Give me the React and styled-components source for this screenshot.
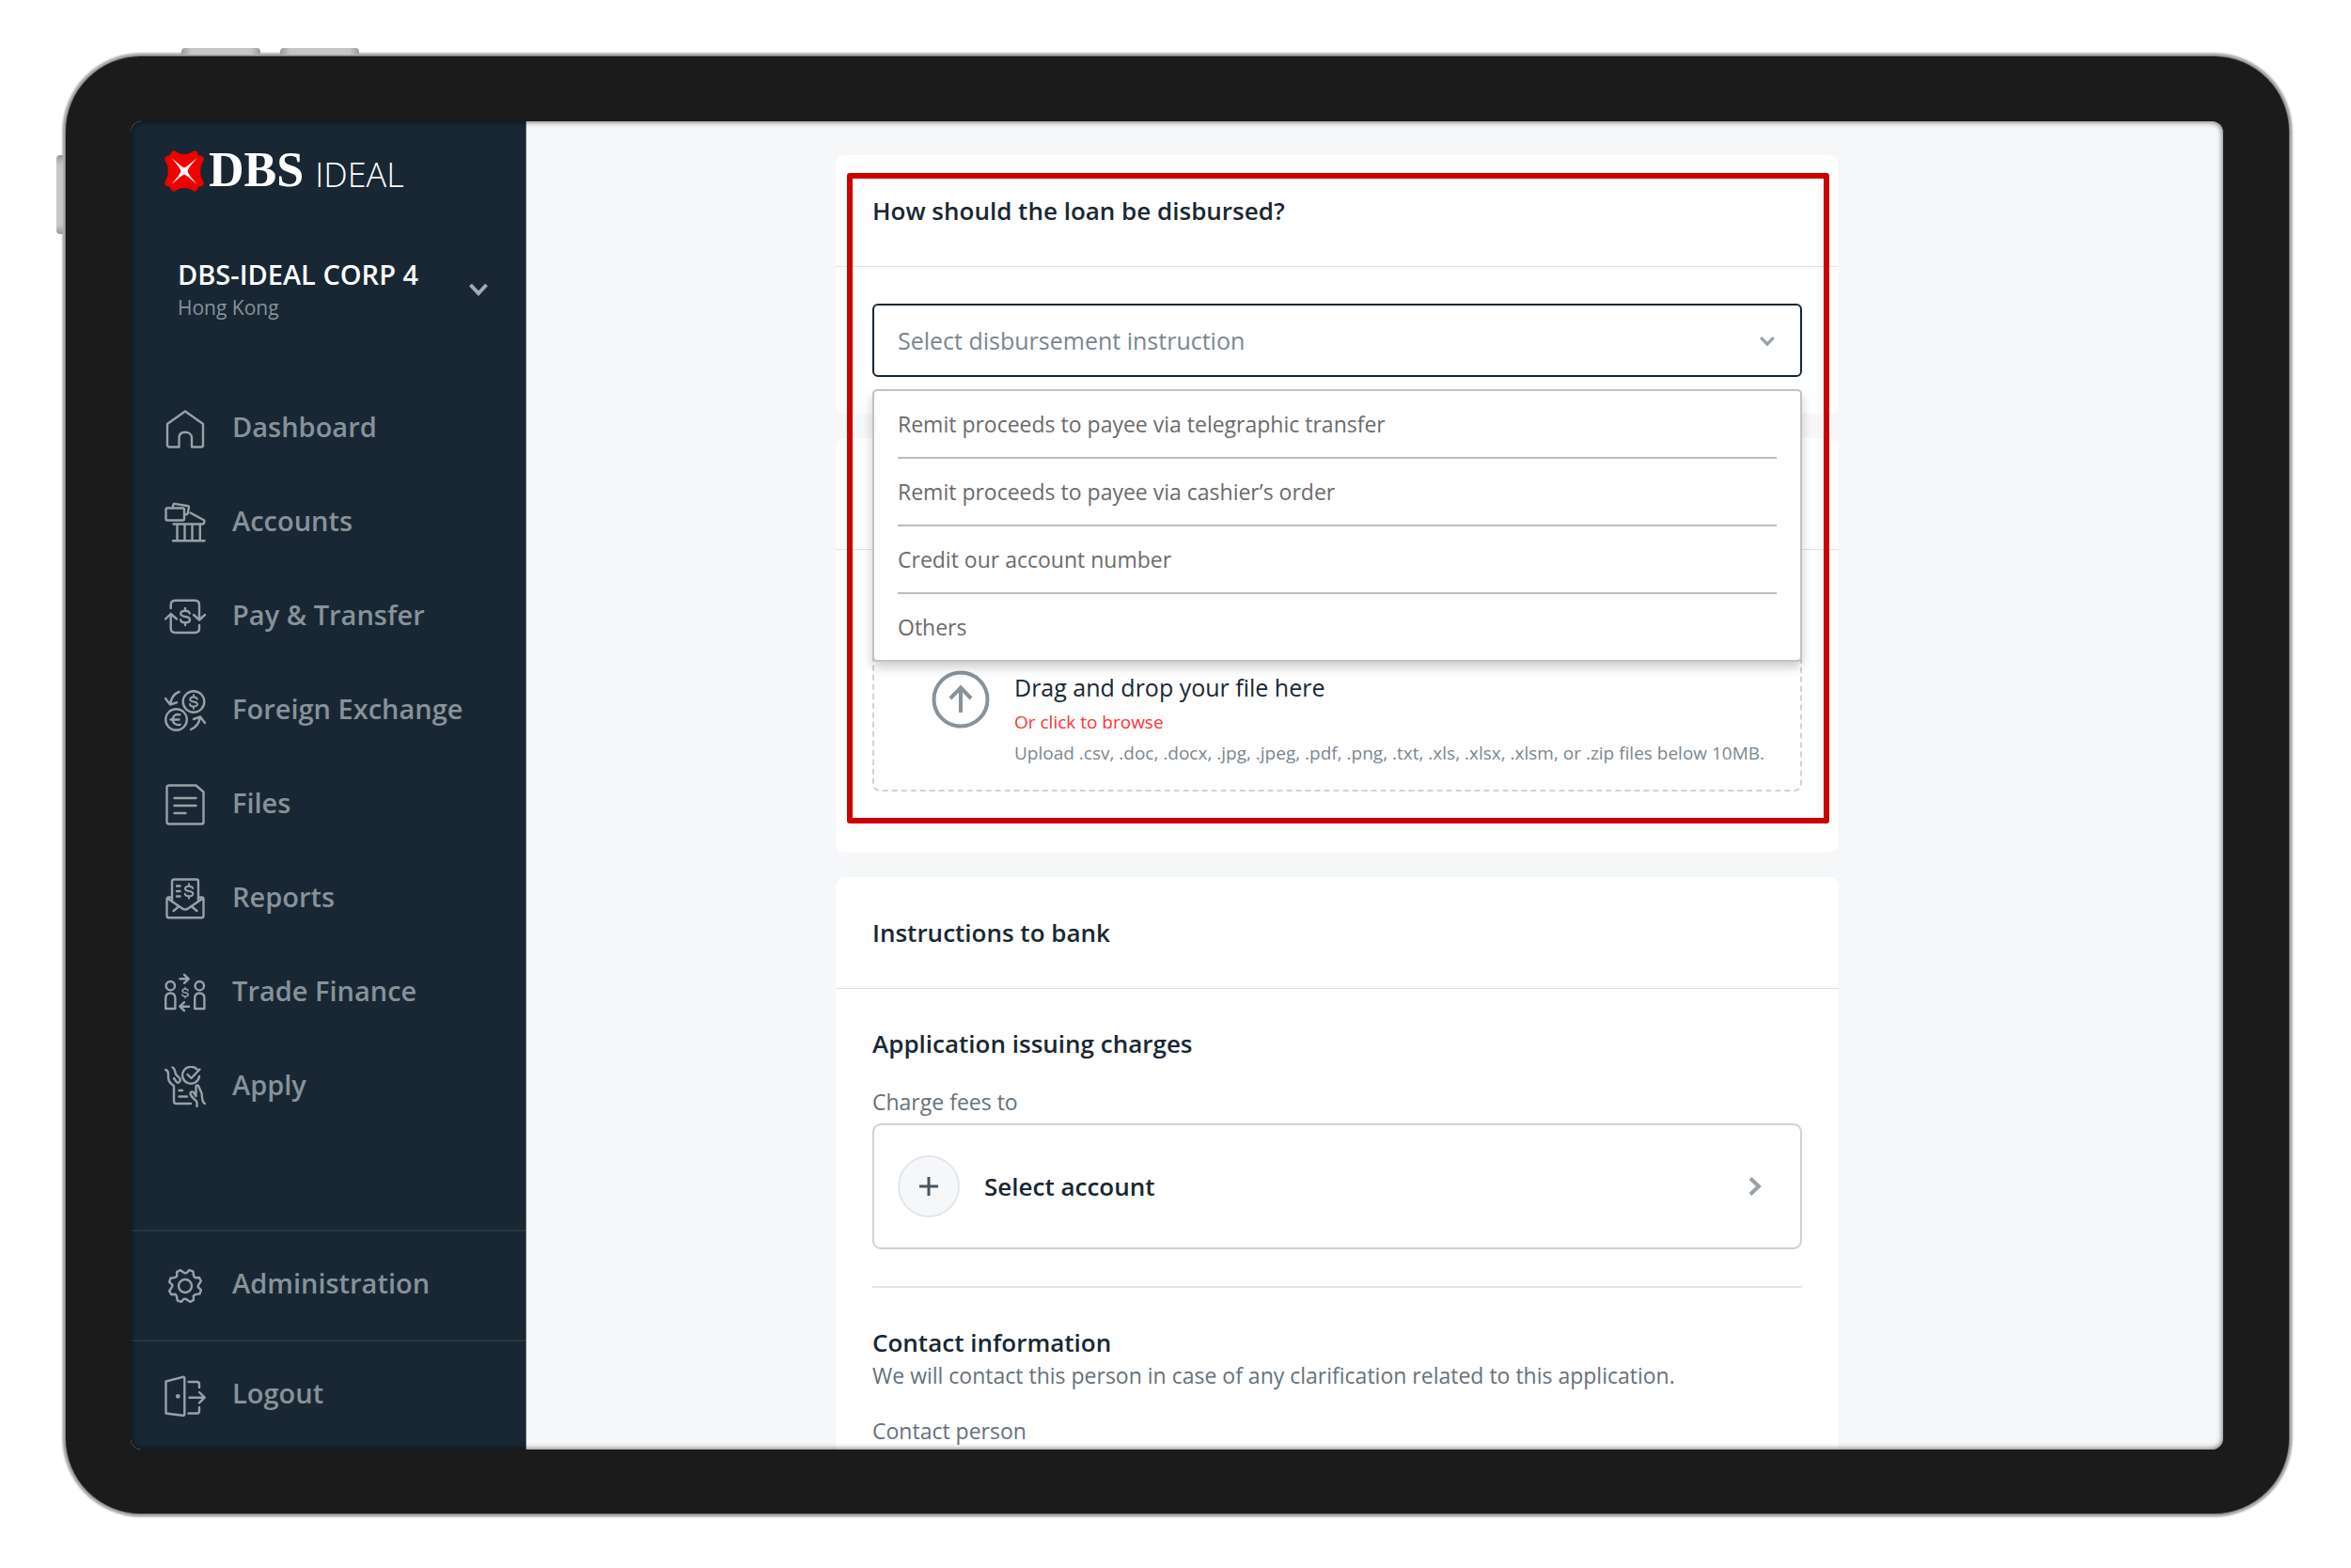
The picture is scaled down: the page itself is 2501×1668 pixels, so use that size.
import React, { useState } from 'react';
import styled, { createGlobalStyle } from 'styled-components';

const GlobalStyle = createGlobalStyle`
  *, *::before, *::after {
    box-sizing: border-box;
  }

  body {
    margin: 0;
    background: #ffffff;
    font-family: 'Open Sans', 'Noto Sans', sans-serif;
  }

  button, input, select {
    font-family: inherit;
  }

  h2, h3, p, ul {
    margin: 0;
    padding: 0;
  }
`;

/* ---------- tablet frame ---------- */

const Stage = styled.div`
  display: flex;
  height: 100vh;
  padding: 60px 66px 58px 70px;
`;

const Device = styled.div`
  position: relative;
  display: flex;
  flex: 1;
  min-width: 0;
  padding: 69px 70px 68px 69px;
  background: #1b1b1b;
  border-radius: 80px;
  box-shadow: 0 0 0 1px #777777, 0 0 0 3px #acacac, 0 0 0 4px #d0d0d0,
    0 0 0 5px #ebebeb;
`;

const HardwareKey = styled.span`
  position: absolute;
  background: linear-gradient(
    ${({ $side }) => ($side ? '180deg' : '90deg')},
    #9a9a9a,
    #c6c6c6 12%,
    #c6c6c6 88%,
    #9a9a9a
  );
  border-radius: ${({ $side }) => ($side ? '4px 0 0 4px' : '4px 4px 0 0')};
  width: ${({ $side }) => ($side ? '7px' : '84px')};
  height: ${({ $side }) => ($side ? '84px' : '7px')};
  left: ${({ $left }) => $left}px;
  top: ${({ $top }) => $top}px;
`;

const Screen = styled.div`
  position: relative;
  display: flex;
  flex: 1;
  min-width: 0;
  overflow: hidden;
  background: #f5f7f9;
  border-radius: 12px;

  &::after {
    content: '';
    position: absolute;
    inset: 0;
    border-radius: 12px;
    box-shadow: inset 0 0 6px rgba(0, 0, 0, 0.7);
    pointer-events: none;
  }
`;

/* ---------- sidebar ---------- */

const Sidebar = styled.aside`
  display: flex;
  flex-direction: column;
  flex: none;
  width: 421px;
  background: #182733;
  border-right: 1px solid #54616b;
`;

const Logo = styled.div`
  display: flex;
  align-items: flex-end;
  height: 75px;
  padding-left: 36px;
  color: #ffffff;
`;

const LogoBank = styled.span`
  margin-left: 5px;
  font-family: 'Liberation Serif', serif;
  font-weight: 700;
  font-size: 52px;
  line-height: 47px;
`;

const LogoProduct = styled.span`
  margin-left: 12px;
  font-weight: 300;
  font-size: 36px;
  line-height: 36px;
`;

const CompanySwitch = styled.button`
  display: flex;
  align-items: center;
  justify-content: space-between;
  margin-top: 69px;
  padding: 0 40px 0 50px;
  border: 0;
  background: none;
  color: #a3abb1;
  text-align: left;
`;

const CompanyName = styled.span`
  display: block;
  font-weight: 600;
  font-size: 29px;
  line-height: 38px;
  color: #ffffff;
`;

const CompanyPlace = styled.span`
  display: block;
  font-size: 21px;
  line-height: 32px;
  color: #87929a;
`;

const Nav = styled.nav`
  display: flex;
  flex-direction: column;
  margin-top: 60px;
`;

const NavFooter = styled.nav`
  display: flex;
  flex-direction: column;
  margin-top: auto;
`;

const NavLink = styled.a`
  display: flex;
  align-items: center;
  gap: 28px;
  height: ${({ $footer }) => ($footer ? '117px' : '100px')};
  padding: ${({ $footer }) => ($footer ? '0 0 6px 36px' : '0 0 0 36px')};
  border-top: ${({ $footer }) => ($footer ? '2px solid #28363f' : '0')};
  font-weight: 600;
  font-size: 29px;
  color: #87929a;
  text-decoration: none;

  svg {
    flex: none;
    margin-top: 6px;
    color: #98a1a8;
  }
`;

/* ---------- form ---------- */

const Main = styled.main`
  display: flex;
  flex: 1;
  justify-content: center;
  min-width: 0;
  padding: 36px 80px 0 0;
`;

const Column = styled.div`
  display: flex;
  flex-direction: column;
  gap: 26px;
  width: 100%;
  max-width: 1067px;
`;

const HighlightGroup = styled.div`
  position: relative;
  display: flex;
  flex-direction: column;
  gap: 26px;
`;

const Highlight = styled.div`
  position: absolute;
  inset: 19px 10px 31px 12px;
  border: 6px solid #cc0000;
  border-radius: 3px;
  pointer-events: none;
`;

const Card = styled.section`
  flex: none;
  background: #ffffff;
  border-radius: 10px;
`;

const CardHeader = styled.header`
  display: flex;
  align-items: center;
  height: 119px;
  padding: 0 39px;
  border-bottom: 1px solid #dde3e8;
`;

const CardBody = styled.div`
  display: flex;
  flex-direction: column;
  padding: 39px;
`;

const UploadBody = styled.div`
  display: flex;
  flex-direction: column;
  justify-content: flex-end;
  height: 322px;
  padding: 39px 39px 65px;
`;

const Title = styled.h2`
  font-weight: 600;
  font-size: 26px;
  line-height: 38px;
  color: #182733;
`;

const Text = styled.p`
  font-size: 23px;
  line-height: 32px;
  color: #66717a;
`;

const FieldLabel = styled.label`
  margin: 27px 0 7px;
  font-size: 23px;
  line-height: 32px;
  color: #66717a;
`;

const Divider = styled.hr`
  width: 100%;
  height: 2px;
  margin: 39px 0;
  border: 0;
  background: #dfe5ea;
`;

const SelectField = styled.div`
  position: relative;
  display: grid;

  > svg {
    position: absolute;
    right: 29px;
    top: 32px;
    color: #98a1a8;
    pointer-events: none;
  }
`;

const Select = styled.select`
  appearance: none;
  width: 100%;
  height: 78px;
  padding: 0 25px;
  border: 2px solid #182733;
  border-radius: 6px;
  background: #ffffff;
  font-size: 25px;
  color: #7b868e;
`;

const Menu = styled.ul`
  position: absolute;
  z-index: 1;
  top: 91px;
  left: 0;
  right: 0;
  padding: 0 25px;
  list-style: none;
  background: #ffffff;
  border: 2px solid #c2c2c2;
  border-radius: 5px;
  box-shadow: 0 6px 12px rgba(0, 0, 0, 0.2);
`;

const MenuItem = styled.li`
  display: grid;

  & + & {
    border-top: 2px solid #bdbdbd;
  }
`;

const MenuButton = styled.button`
  height: 70px;
  padding: 0;
  border: 0;
  background: none;
  font-size: 23px;
  color: #6b6b6b;
  text-align: left;
`;

const DropZone = styled.div`
  display: flex;
  align-items: flex-start;
  gap: 26px;
  padding: 23px 25px 23px 61px;
  border: 2px dashed #cdd4da;
  border-radius: 8px;

  > svg {
    flex: none;
    margin-top: 2px;
    color: #87929a;
  }
`;

const DropText = styled.div`
  display: flex;
  flex-direction: column;
  align-items: flex-start;
`;

const DropTitle = styled.p`
  font-size: 25px;
  line-height: 40px;
  color: #182733;
`;

const BrowseButton = styled.button`
  padding: 0;
  border: 0;
  background: none;
  font-size: 19px;
  line-height: 34px;
  color: #ff3333;
`;

const DropHint = styled.p`
  font-size: 19px;
  line-height: 32px;
  color: #7b868e;
`;

const AccountButton = styled.button`
  display: flex;
  align-items: center;
  gap: 26px;
  height: 134px;
  padding: 0 38px 0 25px;
  border: 2px solid #cbd3da;
  border-radius: 9px;
  background: #ffffff;
  font-weight: 600;
  font-size: 26px;
  color: #182733;

  > svg {
    margin-left: auto;
    color: #98a1a8;
  }
`;

const PlusCircle = styled.span`
  display: flex;
  align-items: center;
  justify-content: center;
  width: 66px;
  height: 66px;
  border: 2px solid #e2e6ea;
  border-radius: 50%;
  background: #f5f7f9;
  color: #4a555e;
`;

const TextInput = styled.input`
  height: 78px;
  padding: 0 25px;
  border: 2px solid #cbd3da;
  border-radius: 6px;
  font-size: 25px;
`;

/* ---------- icons ---------- */

const Icon = ({ children }) => (
  <svg
    width="44"
    height="44"
    viewBox="0 0 44 44"
    fill="none"
    stroke="currentColor"
    strokeWidth="2.4"
    strokeLinecap="round"
    strokeLinejoin="round"
    aria-hidden="true"
  >
    {children}
  </svg>
);

const Dollar = ({ x, y, scale = 1 }) => (
  <path
    transform={`translate(${x} ${y}) scale(${scale})`}
    d="M4.8-3.4C4.4-5.4 2.6-6.3 0-6.3-2.8-6.3-4.8-5.2-4.8-3.2-4.8-1-2.6-.4 0 0 2.8.4 5 1.2 5 3.2 5 5.3 2.8 6.3 0 6.3-2.8 6.3-4.8 5.2-5 3.2M0-9V-6.3M0 6.3V9"
  />
);

const HomeIcon = () => (
  <Icon>
    <path d="M22 3.5 41 17V39.5a2 2 0 0 1-2 2H29V32C29 28 26 25.8 22 25.8S15.500 28 15.500 32V41.500H5a2 2 0 0 1-2-2V17Z" />
  </Icon>
);

const AccountsIcon = () => (
  <Icon>
    <rect x="1.5" y="6.5" width="19.5" height="13" rx="1.5" />
    <path d="M8.6 6.3 9.4 2.6Q9.7 1.8 10.6 1.9L25 4.2Q26.2 4.5 26 5.6L24.6 12.2Q24.3 13.3 23.2 13.2L21 13" />
    <path d="M27.5 11.5 42.3 19.5V21Q42.3 23.5 40 23.5H9.5M13.5 23.5V41M21.5 23.5V41M29.5 23.5V41M37.8 23.5V41M9 41.3H42.5" />
  </Icon>
);

const TransferIcon = () => (
  <Icon>
    <path d="M6.7 13V9.5Q6.7 4.7 11.5 4.7H32.5Q37 4.7 37 9.5V25M31 20 37 25.5 43 20M37 31V34.5Q37 39 32.5 39H11.5Q6.7 39 6.7 34.5V19M1 24.5 6.7 19 13 24.5" />
    <Dollar x={22} y={22} />
  </Icon>
);

const ExchangeIcon = () => (
  <Icon>
    <circle cx="31" cy="12.5" r="11.3" />
    <circle cx="12.5" cy="31.5" r="11.3" />
    <Dollar x={31} y={12.5} scale={0.8} />
    <path d="M16.5 26.3C11.5 25 8.8 28 8.8 31.5S12 38 16.5 36.8M6.5 31.5H15.5" />
    <path d="M15.5 2C10 4 7 8.5 6 15.5M1 9 6 15.5 13 13.3M28 42C34 39.5 37 35 38 28.5M31 31 38 28.5 43 35" />
  </Icon>
);

const FilesIcon = () => (
  <Icon>
    <path d="M5 1.5H33.5L41.5 8.5V40.5Q41.5 42.5 39.5 42.5H4.5Q2.5 42.5 2.5 40.5V3.5Q2.5 1.5 5 1.5ZM10.5 15H33.5M10.5 23H33.5M10.5 31H22.5" />
  </Icon>
);

const ReportsIcon = () => (
  <Icon>
    <path d="M8 25V3.5Q8 1.5 10 1.5H34Q36 1.5 36 3.5V25" />
    <path d="M8 20.5H4.5Q2.5 20.5 2.5 22.5V40Q2.5 42.3 4.5 42.3H39.5Q41.5 42.3 41.5 40V22.5Q41.5 20.5 39.5 20.5H36M3 21.5 19 32.5Q22 34.5 25 32.5L41 21.5M9.5 35 15 30.5M34.5 35 29 30.5" />
    <path d="M13 8.5H16.5M13 14H16.5M13 19.5H16.5" />
    <Dollar x={26} y={14} scale={0.85} />
  </Icon>
);

const TradeIcon = () => (
  <Icon>
    <circle cx="6.3" cy="14.7" r="4.7" />
    <circle cx="37.3" cy="14.7" r="4.7" />
    <path d="M1.2 39V28Q1.2 22.5 6.3 22.5T11.4 28V39ZM32.2 39V28Q32.2 22.5 37.3 22.5T42.4 28V39Z" />
    <path d="M16.5 7.3H25.5M21 2.8 25.7 7.3 21 11.8M26 36.7H16.5M21 32.2 16.3 36.7 21 41.2" />
    <Dollar x={22} y={22} scale={0.62} />
  </Icon>
);

const ApplyIcon = () => (
  <Icon>
    <path d="M34.5 3.4A9 9 0 1 0 37 11M24.5 9 28.5 13 37.5 3.5" />
    <path d="M1 4C4.5 4.5 4 8 4 12S6.5 19 10 21V37.5Q10 40 12.5 40H28M8.5 1.5C11.5 3 11 6 12 8.5S17 12 16.8 15 13.5 18.5 12.5 16.5L10 13" />
    <path d="M15.5 26H19M15.5 32.5H24" />
    <path d="M34.5 43V39C34.5 36 28 34 27.5 29.5 27.5 27 30.5 26.5 31.5 29L33.5 32V22C33.5 20 36 20 36.5 22L39.5 29C40.5 33 39 38 43 40" />
  </Icon>
);

// eight teeth, with a notch pointing straight up
const gearPoints = Array.from({ length: 8 }, (_, i) => {
  const at = (deg, r) => {
    const a = ((i * 45 + deg) * Math.PI) / 180;
    const x = 22 + r * Math.sin(a);
    const y = 22 - r * Math.cos(a);
    return `${x.toFixed(2)},${y.toFixed(2)}`;
  };
  return [at(0, 13.6), at(6, 13.9), at(14, 17.4), at(28, 17.6), at(37, 14.8)];
})
  .flat()
  .join(' ');

const GearIcon = () => (
  <Icon>
    <polygon points={gearPoints} />
    <circle cx="22" cy="22" r="7" />
  </Icon>
);

const LogoutIcon = () => (
  <Icon>
    <path d="M1.5 6.5 19.5 1.8Q21.3 1.5 21.3 3V41.5Q21.3 43 19.5 42.8L1.5 40.5ZM25.5 7H34.5Q37 7 37 9.5V13M25.5 40.5H34.5Q37 40.5 37 38V34M26.5 23.7H42.5M37 18 42.7 23.7 37 29.4" />
    <circle cx="14.3" cy="22.3" r="1.2" fill="currentColor" />
  </Icon>
);

const Chevron = ({ size = 20, turn = 0 }) => (
  <svg
    width={size}
    height={size}
    viewBox="0 0 20 20"
    fill="none"
    stroke="currentColor"
    strokeWidth="4"
    aria-hidden="true"
  >
    <path transform={`rotate(${turn} 10 10)`} d="M1.5 5 10 14 18.5 5" />
  </svg>
);

const Emblem = () => (
  <svg width="42" height="44" viewBox="0 0 42 44" aria-hidden="true">
    <path
      fill="#f00000"
      d="M9 .6C11.5 0 13 2 15 3 19 4.5 23 4.5 27 3 29 2 30.5 0 33 .6 35.5 1.2 35 4.5 37 5.2 39.5 5.6 42 6.8 41.7 9.5 41.5 12 39.5 13.5 39 16 38 20 38 24 39 28 39.5 30.5 41.5 32 41.7 34.5 42 37.2 39.5 38.4 37 38.8 35 39.5 35.5 42.8 33 43.4 30.5 44 29 42 27 41 23 39.5 19 39.5 15 41 13 42 11.5 44 9 43.4 6.5 42.8 7 39.5 5 38.8 2.5 38.4 0 37.2 .3 34.5 .5 32 2.500 30.500 3 28 4 24 4 20 3 16 2.500 13.500 .5 12 .3 9.500 0 6.800 2.500 5.600 5 5.200 7 4.500 6.500 1.200 9 .6Z"
    />
    <path
      fill="#ffffff"
      d="M7.5 8C13 12.5 17 16.5 21 18.500 25 16.500 29 12.500 34.500 8 30 13.500 26 17.500 24.500 22 26 26.500 30 30.500 34.500 36 29 31.500 25 27.500 21 25.500 17 27.500 13 31.500 7.500 36 12 30.500 16 26.500 17.500 22 16 17.500 12 13.500 7.500 8Z"
    />
  </svg>
);

const UploadIcon = () => (
  <svg
    width="62"
    height="62"
    viewBox="0 0 62 62"
    fill="none"
    stroke="currentColor"
    strokeWidth="4"
    aria-hidden="true"
  >
    <circle cx="31" cy="31" r="28.5" />
    <path d="M31 45V19M20 30 31 18.5 42 30" />
  </svg>
);

const PlusIcon = () => (
  <svg width="20" height="20" viewBox="0 0 20 20" aria-hidden="true">
    <path d="M10 0V20M0 10H20" stroke="currentColor" strokeWidth="3" />
  </svg>
);

/* ---------- data ---------- */

const navItems = [
  { label: 'Dashboard', icon: HomeIcon },
  { label: 'Accounts', icon: AccountsIcon },
  { label: 'Pay & Transfer', icon: TransferIcon },
  { label: 'Foreign Exchange', icon: ExchangeIcon },
  { label: 'Files', icon: FilesIcon },
  { label: 'Reports', icon: ReportsIcon },
  { label: 'Trade Finance', icon: TradeIcon },
  { label: 'Apply', icon: ApplyIcon },
];

const footerItems = [
  { label: 'Administration', icon: GearIcon },
  { label: 'Logout', icon: LogoutIcon },
];

const instructions = [
  'Remit proceeds to payee via telegraphic transfer',
  'Remit proceeds to payee via cashier’s order',
  'Credit our account number',
  'Others',
];

/* ---------- sections ---------- */

const SideMenu = () => (
  <Sidebar>
    <Logo>
      <Emblem />
      <LogoBank>DBS</LogoBank>
      <LogoProduct>IDEAL</LogoProduct>
    </Logo>
    <CompanySwitch type="button">
      <span>
        <CompanyName>DBS-IDEAL CORP 4</CompanyName>
        <CompanyPlace>Hong Kong</CompanyPlace>
      </span>
      <Chevron />
    </CompanySwitch>
    <Nav aria-label="Main">
      {navItems.map(({ label, icon: ItemIcon }) => (
        <NavLink key={label} href="#">
          <ItemIcon />
          {label}
        </NavLink>
      ))}
    </Nav>
    <NavFooter aria-label="Account">
      {footerItems.map(({ label, icon: ItemIcon }) => (
        <NavLink key={label} href="#" $footer>
          <ItemIcon />
          {label}
        </NavLink>
      ))}
    </NavFooter>
  </Sidebar>
);

const DisbursementCard = () => {
  const [value, setValue] = useState('');
  const [open, setOpen] = useState(true);

  const pick = (option) => {
    setValue(option);
    setOpen(false);
  };

  return (
    <Card>
      <CardHeader>
        <Title as="label" htmlFor="disbursement">
          How should the loan be disbursed?
        </Title>
      </CardHeader>
      <CardBody>
        <SelectField>
          <Select
            id="disbursement"
            value={value}
            onChange={(e) => pick(e.target.value)}
          >
            <option value="">Select disbursement instruction</option>
            {instructions.map((option) => (
              <option key={option}>{option}</option>
            ))}
          </Select>
          <Chevron size={16} />
          {open && (
            <Menu>
              {instructions.map((option) => (
                <MenuItem key={option}>
                  <MenuButton type="button" onClick={() => pick(option)}>
                    {option}
                  </MenuButton>
                </MenuItem>
              ))}
            </Menu>
          )}
        </SelectField>
      </CardBody>
    </Card>
  );
};

const UploadCard = () => (
  <Card>
    <CardHeader />
    <UploadBody>
      <DropZone>
        <UploadIcon />
        <DropText>
          <DropTitle>Drag and drop your file here</DropTitle>
          <BrowseButton type="button">Or click to browse</BrowseButton>
          <DropHint>
            Upload .csv, .doc, .docx, .jpg, .jpeg, .pdf, .png, .txt, .xls,
            .xlsx, .xlsm, or .zip files below 10MB.
          </DropHint>
        </DropText>
      </DropZone>
    </UploadBody>
  </Card>
);

const InstructionsCard = () => (
  <Card>
    <CardHeader>
      <Title>Instructions to bank</Title>
    </CardHeader>
    <CardBody>
      <Title as="h3">Application issuing charges</Title>
      <FieldLabel htmlFor="charge-account">Charge fees to</FieldLabel>
      <AccountButton id="charge-account" type="button">
        <PlusCircle>
          <PlusIcon />
        </PlusCircle>
        Select account
        <Chevron turn={-90} />
      </AccountButton>
      <Divider />
      <Title as="h3">Contact information</Title>
      <Text>
        We will contact this person in case of any clarification related to this
        application.
      </Text>
      <FieldLabel htmlFor="contact-person">Contact person</FieldLabel>
      <TextInput id="contact-person" type="text" />
    </CardBody>
  </Card>
);

const App = () => (
  <>
    <GlobalStyle />
    <Stage>
      <Device>
        <HardwareKey $left={123} $top={-9} />
        <HardwareKey $left={228} $top={-9} />
        <HardwareKey $side $left={-10} $top={105} />
        <Screen>
          <SideMenu />
          <Main>
            <Column>
              <HighlightGroup>
                <DisbursementCard />
                <UploadCard />
                <Highlight />
              </HighlightGroup>
              <InstructionsCard />
            </Column>
          </Main>
        </Screen>
      </Device>
    </Stage>
  </>
);

export default App;
